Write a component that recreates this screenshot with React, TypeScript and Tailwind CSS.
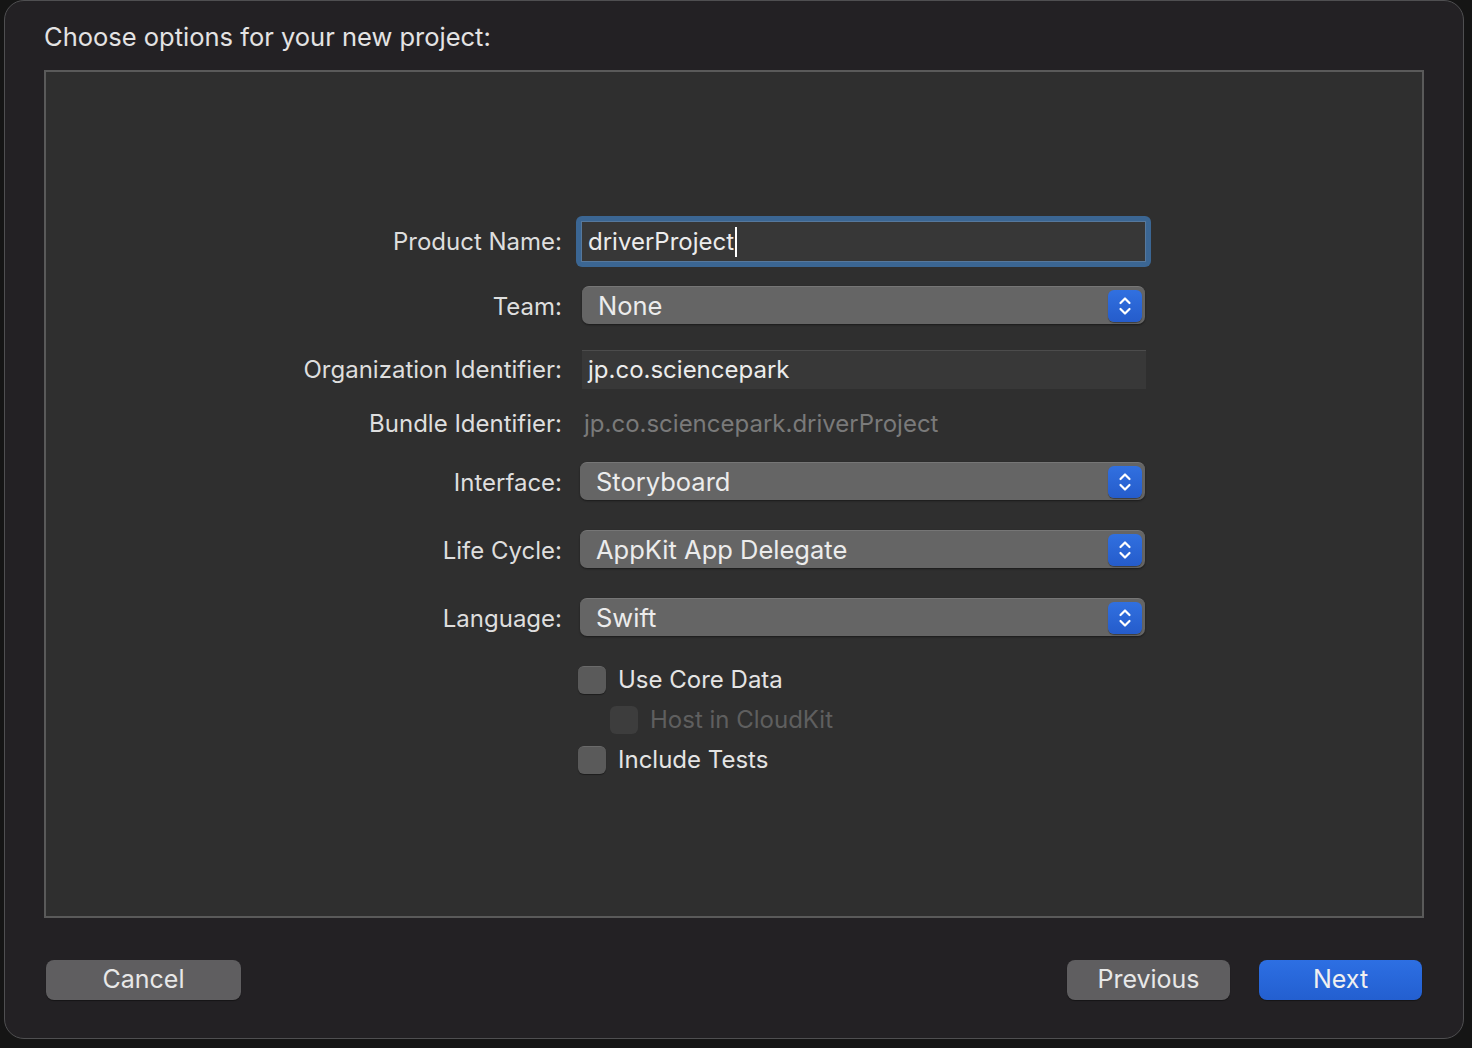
import React from "react";

const font = { fontFamily: "Inter, 'Noto Sans', sans-serif" };

function Stepper() {
  return (
    <div className="flex h-[32px] w-[34px] items-center justify-center rounded-[6px] bg-gradient-to-b from-[#3170e0] to-[#255ccb] shadow-[0_1px_1px_rgba(0,0,0,0.4)]">
      <svg width="16" height="22" viewBox="0 0 16 22" fill="none">
        <path d="M3.5 8 L8 3.5 L12.5 8" stroke="#fff" strokeWidth="2.2" strokeLinecap="round" strokeLinejoin="round" />
        <path d="M3.5 14 L8 18.5 L12.5 14" stroke="#fff" strokeWidth="2.2" strokeLinecap="round" strokeLinejoin="round" />
      </svg>
    </div>
  );
}

function Popup({ value, left = 4, width = 565 }: { value: string; left?: number; width?: number }) {
  return (
    <div
      className="flex h-[38px] items-center justify-between rounded-[7px] border-t border-[#767676] bg-[#656565] pl-[16px] pr-[3px] shadow-[0_1px_2px_rgba(0,0,0,0.45)]"
      style={{ marginLeft: left, width }}
    >
      <span className="text-[25.5px] leading-none text-[#ececec]">{value}</span>
      <Stepper />
    </div>
  );
}

function Label({ children }: { children: React.ReactNode }) {
  return <div className="w-[516px] shrink-0 text-right text-[24px] leading-none text-[#dedede]">{children}</div>;
}

function Checkbox({ label, disabled }: { label: string; disabled?: boolean }) {
  return (
    <div className="flex items-center gap-[12px]">
      <div
        className={
          disabled
            ? "h-[28px] w-[28px] rounded-[6px] bg-[#3d3d3d]"
            : "h-[28px] w-[28px] rounded-[6px] border-t border-[#6a6a6a] bg-[#5a5a5a] shadow-[0_1px_1px_rgba(0,0,0,0.4)]"
        }
      />
      <span className={disabled ? "text-[24px] leading-none text-[#5f5f5f]" : "text-[24px] leading-none text-[#e4e4e4]"}>
        {label}
      </span>
    </div>
  );
}

export default function App() {
  return (
    <div className="h-[1048px] w-[1472px] bg-[#151515]" style={font}>
      <div className="ml-[4px] flex h-[1039px] w-[1460px] flex-col rounded-[20px] border border-[#4f4f51] bg-[#232124] px-[39px] pt-[20px]">
        <div className="h-[32px] text-[25.5px] leading-[32px] text-[#e3e3e3]">Choose options for your new project:</div>

        {/* options panel */}
        <div className="mt-[17px] flex h-[848px] w-[1380px] flex-col border-2 border-[#5a5a5a] bg-[#2f2f2f] pt-[144px]">
          <div className="flex h-[51px] items-center gap-[14px]">
            <Label>Product Name:</Label>
            <div className="h-[51px] w-[575px] rounded-[6px] bg-[#3b6693] p-[5px]">
              <div className="flex h-full items-center border border-[#56789c] bg-[#373737] pl-[6px]">
                <span className="text-[24px] leading-none text-[#ececec]">driverProject</span>
                <span className="ml-[1px] h-[30px] w-[2px] bg-white" />
              </div>
            </div>
          </div>

          <div className="mt-[19px] flex h-[38px] items-center gap-[14px]">
            <Label>
              <span className="relative top-[2px]">Team:</span>
            </Label>
            <Popup value="None" left={6} width={563} />
          </div>

          <div className="mt-[26px] flex h-[39px] items-center gap-[14px]">
            <Label>Organization Identifier:</Label>
            <div className="ml-[6px] flex h-[39px] w-[564px] items-center border-t border-[#4c4c4c] bg-[#383838] pl-[6px]">
              <span className="text-[24px] leading-none text-[#ececec]">jp.co.sciencepark</span>
            </div>
          </div>

          <div className="mt-[20px] flex h-[30px] items-center gap-[14px]">
            <Label>Bundle Identifier:</Label>
            <span className="ml-[8px] text-[24px] leading-none text-[#7a7a7a]">jp.co.sciencepark.driverProject</span>
          </div>

          <div className="mt-[23px] flex h-[38px] items-center gap-[14px]">
            <Label>
              <span className="relative top-[2px]">Interface:</span>
            </Label>
            <Popup value="Storyboard" />
          </div>

          <div className="mt-[30px] flex h-[38px] items-center gap-[14px]">
            <Label>
              <span className="relative top-[2px]">Life Cycle:</span>
            </Label>
            <Popup value="AppKit App Delegate" />
          </div>

          <div className="mt-[30px] flex h-[38px] items-center gap-[14px]">
            <Label>
              <span className="relative top-[2px]">Language:</span>
            </Label>
            <Popup value="Swift" />
          </div>

          <div className="ml-[530px] mt-[30px] flex flex-col gap-[12px] pl-[2px]">
            <Checkbox label="Use Core Data" />
            <div className="pl-[32px]">
              <Checkbox label="Host in CloudKit" disabled />
            </div>
            <Checkbox label="Include Tests" />
          </div>
        </div>

        {/* buttons */}
        <div className="mt-[42px] flex items-center">
          <button className="ml-[2px] h-[40px] w-[195px] rounded-[8px] bg-[#5f5e60] text-[25px] text-[#e8e8e8] shadow-[0_1px_1px_rgba(0,0,0,0.4)]">
            Cancel
          </button>
          <div className="flex-1" />
          <button className="h-[40px] w-[163px] rounded-[8px] bg-[#5f5e60] text-[25px] text-[#e8e8e8] shadow-[0_1px_1px_rgba(0,0,0,0.4)]">
            Previous
          </button>
          <button className="ml-[29px] mr-[2px] h-[40px] w-[163px] rounded-[8px] bg-gradient-to-b from-[#2d6fe3] to-[#235fd0] text-[25px] text-[#f0f0f0] shadow-[0_1px_1px_rgba(0,0,0,0.4)]">
            Next
          </button>
        </div>
      </div>
    </div>
  );
}
